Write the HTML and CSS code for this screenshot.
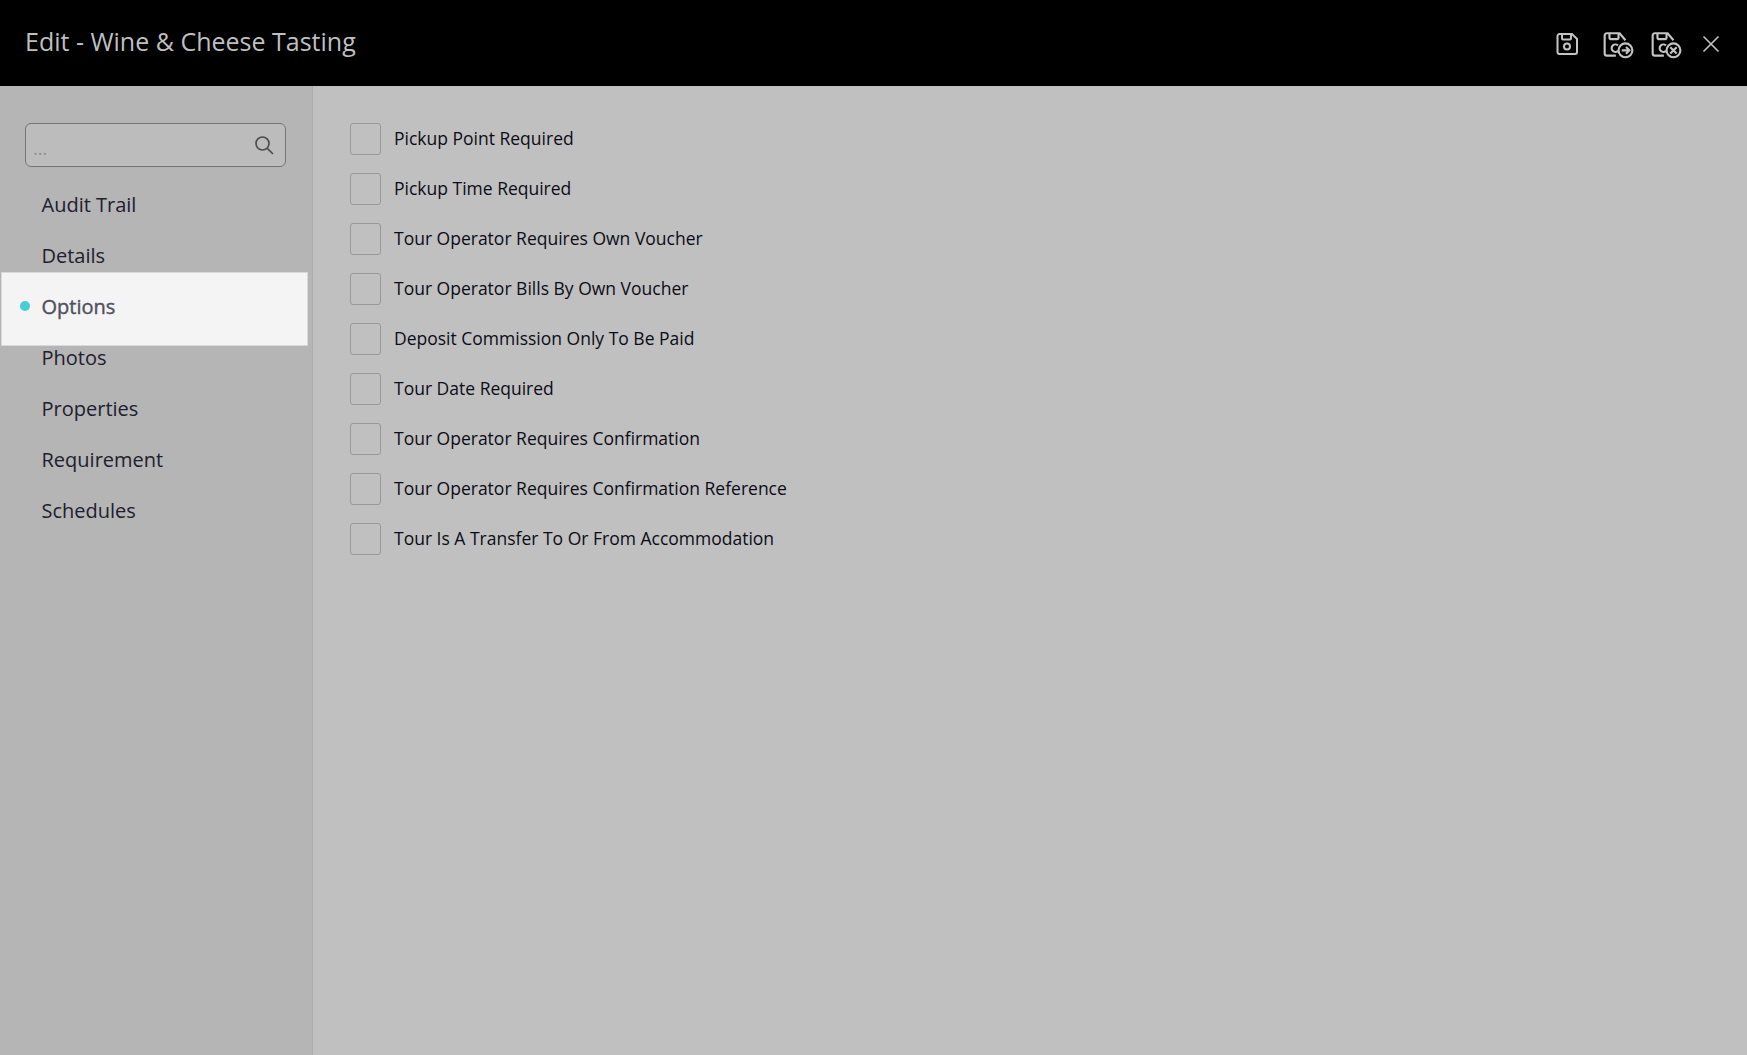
FILE: index.html
```html
<!DOCTYPE html>
<html lang="en">
<head>
<meta charset="utf-8">
<title>Edit - Wine &amp; Cheese Tasting</title>
<link rel="stylesheet" href="styles.css">
</head>
<body>
<header class="topbar">
  <h1 class="title">Edit - Wine &amp; Cheese Tasting</h1>
  <div class="actions">
    <svg class="icon icon-save" viewBox="0 0 24 24"><path d="M4.500 2h12.500l5 5v13a2 2 0 0 1-2 2h-15.500a2 2 0 0 1-2-2v-16a2 2 0 0 1 2-2z"/><path d="M7 2v4.500a1 1 0 0 0 1 1h7a1 1 0 0 0 1-1v-4.500"/><circle cx="12" cy="14.500" r="3"/></svg>
    <svg class="icon icon-wide icon-next" viewBox="0 0 30 26"><path d="M13 23h-8.500a2 2 0 0 1-2-2v-17a2 2 0 0 1 2-2h12l5.500 6.500"/><path d="M7 2v4.500a1 1 0 0 0 1 1h6.500a1 1 0 0 0 1-1v-4.500"/><path d="M15 13.500a3.500 3.500 0 1 0 0 5"/><circle cx="22" cy="18" r="6.500"/><path d="M18.500 18h7M22.500 14.800l3.200 3.200-3.200 3.200"/></svg>
    <svg class="icon icon-wide" viewBox="0 0 30 26"><path d="M13 23h-8.500a2 2 0 0 1-2-2v-17a2 2 0 0 1 2-2h12l5.500 6.500"/><path d="M7 2v4.500a1 1 0 0 0 1 1h6.500a1 1 0 0 0 1-1v-4.500"/><path d="M15 13.500a3.500 3.500 0 1 0 0 5"/><circle cx="22" cy="18" r="6.500"/><path d="M19 15l6 6M25 15l-6 6"/></svg>
    <svg class="icon icon-close" viewBox="0 0 18 18"><path d="M1.500 1.500l15 15M16.500 1.500l-15 15"/></svg>
  </div>
</header>
<div class="body">
  <aside class="sidebar">
    <div class="search">
      <span class="search-placeholder">...</span>
      <svg class="search-icon" viewBox="0 0 20 20"><circle cx="8.500" cy="8.500" r="6.500"/><path d="M13.300 13.300l5.700 5.700"/></svg>
    </div>
    <nav class="nav">
      <a class="nav-item">Audit Trail</a>
      <a class="nav-item">Details</a>
      <a class="nav-item is-active">Options</a>
      <a class="nav-item">Photos</a>
      <a class="nav-item">Properties</a>
      <a class="nav-item">Requirement</a>
      <a class="nav-item">Schedules</a>
    </nav>
  </aside>
  <main class="content">
    <label class="option"><span class="box"></span>Pickup Point Required</label>
    <label class="option"><span class="box"></span>Pickup Time Required</label>
    <label class="option"><span class="box"></span>Tour Operator Requires Own Voucher</label>
    <label class="option"><span class="box"></span>Tour Operator Bills By Own Voucher</label>
    <label class="option"><span class="box"></span>Deposit Commission Only To Be Paid</label>
    <label class="option"><span class="box"></span>Tour Date Required</label>
    <label class="option"><span class="box"></span>Tour Operator Requires Confirmation</label>
    <label class="option"><span class="box"></span>Tour Operator Requires Confirmation Reference</label>
    <label class="option"><span class="box"></span>Tour Is A Transfer To Or From Accommodation</label>
  </main>
</div>
</body>
</html>
```
FILE: styles.css
```css
* { box-sizing: border-box; }
html, body { height: 100%; }
body {
  margin: 0;
  display: flex;
  flex-direction: column;
  overflow: hidden;
  font-family: "Open Sans", "Noto Sans", sans-serif;
  background: #c0c0c0;
}
.topbar {
  flex: 0 0 86px;
  background: #000;
  display: flex;
  align-items: center;
  justify-content: space-between;
  padding: 0 27px 0 25px;
}
.title {
  margin: 0 0 4px;
  font-size: 25px;
  font-weight: 400;
  color: #bfbfbf;
}
.actions { display: flex; align-items: flex-start; align-self: flex-start; margin-top: 31px; }
.icon { fill: none; stroke: #c4c4c4; stroke-width: 2; display: block; }
.icon-save { width: 24px; height: 24px; margin-top: 1px; margin-right: 23px; }
.icon-wide { width: 32px; height: 28px; margin-right: 20px; }
.icon-next { margin-right: 16px; }
.icon-close { width: 18px; height: 18px; margin-top: 4px; stroke-width: 1.600; }
.body { flex: 1; display: flex; min-height: 0; }
.sidebar {
  flex: 0 0 313px;
  background: #b5b5b5;
  border-right: 1px solid #acacac;
  padding: 37px 4px 0 1px;
}
.search {
  margin: 0 22px 0 24px;
  height: 44px;
  border: 1px solid #757575;
  border-radius: 6px;
  background: #bcbcbc;
  display: flex;
  align-items: center;
  justify-content: space-between;
  padding: 0 11px 0 7px;
}
.search-placeholder { color: #8f8f8f; font-size: 18px; line-height: 1; margin-top: 5px; }
.search-icon { width: 20px; height: 20px; fill: none; stroke: #4d4d4d; stroke-width: 1.700; }
.nav { display: flex; flex-direction: column; margin-top: 12px; }
.nav-item {
  height: 51px;
  display: flex;
  align-items: center;
  padding-left: 40.500px;
  font-size: 20px;
  color: #20202e;
  position: relative;
}
.is-active {
  height: 74px;
  margin: -9px 0 -14px;
  padding-bottom: 5px;
  background: #f4f4f4;
  border: 1px solid #d9d9d9;
  padding-left: 39.500px;
  color: #50505e;
  z-index: 1;
  -webkit-text-stroke: 0.400px #50505e;
}
.is-active::before {
  content: "";
  position: absolute;
  left: 17.500px;
  top: 28px;
  width: 10px;
  height: 10px;
  border-radius: 50%;
  background: #46cdd8;
}
.content {
  flex: 1;
  padding: 37px 0 0 37px;
  display: flex;
  flex-direction: column;
  gap: 18px;
}
.option {
  display: flex;
  align-items: center;
  height: 32px;
  padding-bottom: 2px;
  font-size: 17.500px;
  color: #0c0c16;
}
.box {
  width: 31px;
  height: 32px;
  margin-right: 13px;
  margin-top: 2px;
  border: 1px solid #999;
  border-radius: 3px;
}
```
